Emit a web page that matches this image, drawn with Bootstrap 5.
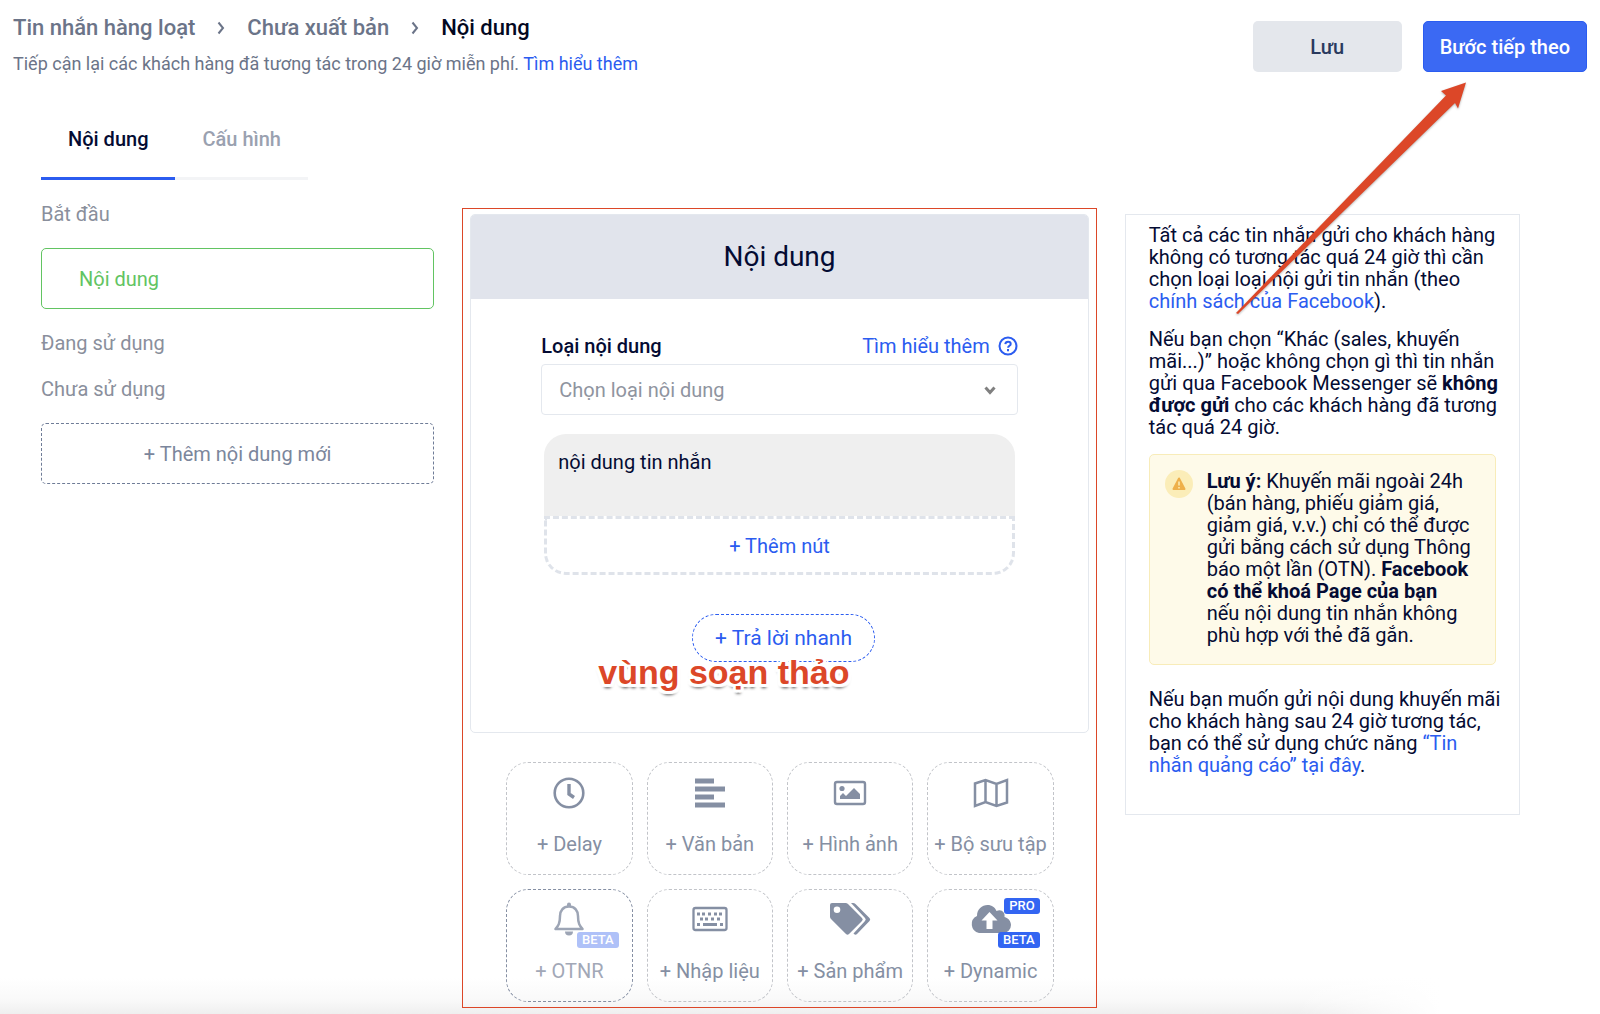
<!DOCTYPE html>
<html lang="vi">
<head>
<meta charset="utf-8">
<meta name="viewport" content="width=device-width, initial-scale=1">
<title>Tin nhắn hàng loạt</title>
<link href="https://cdn.jsdelivr.net/npm/bootstrap@5.3.0/dist/css/bootstrap.min.css" rel="stylesheet">
<style>
:root{--ink:#040b33;--slate:#6b7488;--muted:#8a8f9c;--tile:#858fa3;--blue:#2b5cf0;--line:#e4e8ee;--red:#dc4728}
body{font-family:Roboto,"Noto Sans",sans-serif;font-size:20px;line-height:24px;color:var(--ink);background:#fff;min-height:100vh}
a{color:var(--blue);text-decoration:none}
.page{background:linear-gradient(to right,transparent 81%,#fff 90%),linear-gradient(to top,#efefef,#f9f9f9 14px,#fff 36px);min-height:100vh;padding-bottom:6px}
.topbar{padding:14px 13px 0}
.crumbs{font-size:22px;line-height:28px;font-weight:500;gap:22px;margin-bottom:11px}
.crumbs a{color:var(--slate)}
.crumbs .here{color:#03081f}
.subtitle{font-size:18px;line-height:22px;color:var(--slate)}
.actions{gap:21px;padding-top:7px}
.actions .btn{height:51px;border-radius:5px;font-size:20px;font-weight:500;padding:0 16px}
.btn-save{min-width:149px;background:#e4e7ec;color:#2a3a5e}
.btn-next{background:#3b69f3;color:#fff;border-color:#2b5cf0}
.tabs{padding:52px 0 0 41px}
.tabs .nav-link{color:#9aa1b0;font-weight:500;padding:0 27px 26px;border-bottom:3px solid #f3f4f6}
.tabs .nav-link.active{color:var(--ink);border-color:var(--blue)}
.board{display:grid;grid-template-columns:393fr 634fr 395fr;column-gap:28px;align-items:start;padding:22px 80px 0 41px}
.steps{gap:22px;color:var(--muted)}
.step-btn{height:61px;border-radius:5px;background:#fff;text-align:left;padding:0 37px;border:1px solid #62c462;color:#62c462}
.step-add{border:1px dashed #6f7c97;color:#7b869c;text-align:center}
.editor{margin-top:6px;border:1px solid var(--red);padding:5px 7px}
.composer{border:1px solid var(--line);border-radius:5px;background:#fff;position:relative}
.composer-head{background:#e1e4ec;font-size:28px;line-height:34px;padding:25px 0;border-radius:4px 4px 0 0;font-weight:400;margin:0}
.composer-body{padding:35px 70px 70px}
.composer-body label{font-weight:500}
.composer-body .form-select{height:51px;margin:6px 0 19px;border-color:#e4e8ee;border-radius:4px;color:#8f94a0;font-size:20px;padding:0 40px 0 17px;background-image:url("data:image/svg+xml,%3Csvg xmlns='http://www.w3.org/2000/svg' viewBox='0 0 16 16'%3E%3Cpath d='M3.5 5.5 8 10.500l4.500-5' fill='none' stroke='%23808080' stroke-width='3'/%3E%3C/svg%3E");background-size:16px 16px;background-position:right 19px center}
.bubble{margin:0 3px}
.bubble-text{display:block;width:100%;height:82px;border:0;resize:none;border-radius:22px 22px 0 0;background:#efefef;color:var(--ink);padding:16px 14px;line-height:24px}
.bubble-add{width:100%;height:59px;border:3px dashed #dfe3ea;border-radius:0 0 22px 22px;background:#fff;color:var(--blue)}
.quick{height:48px;font-size:21px;border:1px dashed var(--blue);border-radius:24px;background:#fff;color:var(--blue);padding:0 22px;margin:39px 0 0 8px}
.note-label{position:absolute;left:127px;bottom:40px;font:bold 34px/40px "Liberation Sans",Arial,sans-serif;color:var(--red);
text-shadow:2px 0 #fff,-2px 0 #fff,0 2px #fff,0 -2px #fff,2px 2px #fff,-2px 2px #fff,2px -2px #fff,-2px -2px #fff,3px 0 #fff,-3px 0 #fff,0 3px #fff,3px 3px 1px #fff,-3px 3px 1px #fff,0 4px 3px rgba(0,0,0,.7)}
.blocks{display:grid;grid-template-columns:repeat(4,1fr);gap:14px;padding:29px 35px 0 36px}
.block{position:relative;height:113px;border:1px dashed #c2c4c9;border-radius:22px;background:transparent;color:var(--tile);padding:10px 0 0;gap:19px;white-space:nowrap}
.block svg{width:42px;height:40px;fill:none;stroke:var(--tile);stroke-width:2}
.block .solid{fill:var(--tile);stroke:none}
.block.off{border-color:#858fa3;color:#a2a8b7}
.block.off svg{opacity:.8}
.tag{position:absolute;right:13px;font-size:13px;line-height:16px;font-weight:500;background:#3365f2;color:#fff;border-radius:3px;padding:0 5px;border:0}
.tag-low{top:42px}
.tag-high{top:8px}
.off .tag{background:#afc1f8}
.info{margin-top:12px;border:1px solid var(--line);background:#fff;padding:9px 15px 38px 23px;line-height:22px}
.info p{margin-bottom:16px}
.warn{background:#fefae9;border:1px solid #f8ecb9;border-radius:5px;padding:15px 22px 18px 15px;gap:14px;margin:0 8px 23px 0}
.warn svg{width:28px;height:28px;flex:none}
.pointer{position:absolute;top:76px;right:130px;width:240px;height:242px;pointer-events:none;z-index:5;filter:drop-shadow(0 1px 1px rgba(0,0,0,.3))}
</style>
<script src="https://cdn.jsdelivr.net/npm/bootstrap@5.3.0/dist/js/bootstrap.bundle.min.js"></script>
</head>
<body>
<div class="page position-relative">
  <header class="topbar d-flex justify-content-between align-items-start">
    <div>
      <nav aria-label="breadcrumb">
        <ol class="crumbs d-flex list-unstyled align-items-center">
          <li><a href="#">Tin nhắn hàng loạt</a></li>
          <li class="d-flex" aria-hidden="true"><svg width="8" height="14" viewBox="0 0 8 14" fill="none" stroke="#6b7488" stroke-width="2"><path d="M1.500 1.500 6 7l-4.500 5.500"/></svg></li>
          <li><a href="#">Chưa xuất bản</a></li>
          <li class="d-flex" aria-hidden="true"><svg width="8" height="14" viewBox="0 0 8 14" fill="none" stroke="#6b7488" stroke-width="2"><path d="M1.500 1.500 6 7l-4.500 5.500"/></svg></li>
          <li class="here" aria-current="page">Nội dung</li>
        </ol>
      </nav>
      <div class="subtitle">Tiếp cận lại các khách hàng đã tương tác trong 24 giờ miễn phí. <a href="#">Tìm hiểu thêm</a></div>
    </div>
    <div class="actions d-flex">
      <button type="button" class="btn btn-save">Lưu</button>
      <button type="button" class="btn btn-next">Bước tiếp theo</button>
    </div>
  </header>

  <nav class="tabs nav">
    <a class="nav-link active" href="#">Nội dung</a>
    <a class="nav-link" href="#">Cấu hình</a>
  </nav>

  <main class="board">
    <section class="steps d-flex flex-column">
      <div>Bắt đầu</div>
      <button type="button" class="step-btn">Nội dung</button>
      <div>Đang sử dụng</div>
      <div>Chưa sử dụng</div>
      <button type="button" class="step-btn step-add">+ Thêm nội dung mới</button>
    </section>

    <section class="editor">
      <div class="composer">
        <h1 class="composer-head text-center">Nội dung</h1>
        <div class="composer-body">
          <div class="d-flex justify-content-between">
            <label for="kind">Loại nội dung</label>
            <a href="#" class="d-flex align-items-center gap-2">Tìm hiểu thêm
              <svg width="20" height="20" viewBox="0 0 20 20" fill="none" stroke="#2b5cf0" stroke-width="2"><circle cx="10" cy="10" r="8.500"/><path d="M7.300 8.200c.2-1.600 1.300-2.400 2.800-2.400 1.600 0 2.600.9 2.600 2.100 0 1.900-2.600 1.800-2.600 3.900"/><path d="M10 13v2.200"/></svg></a>
          </div>
          <select id="kind" class="form-select"><option>Chọn loại nội dung</option></select>
          <div class="bubble">
            <textarea class="bubble-text" aria-label="Tin nhắn">nội dung tin nhắn</textarea>
            <button type="button" class="bubble-add d-block">+ Thêm nút</button>
          </div>
          <div class="text-center"><button type="button" class="quick">+ Trả lời nhanh</button></div>
        </div>
        <div class="note-label">vùng soạn thảo</div>
      </div>

      <div class="blocks">
        <button type="button" class="block d-flex flex-column align-items-center">
          <svg viewBox="0 0 42 40"><circle cx="21" cy="20" r="14.300" stroke-width="2.600"/><path d="M21 11v10l5 3.500" stroke-width="3.400"/></svg>
          <span>+ Delay</span></button>
        <button type="button" class="block d-flex flex-column align-items-center">
          <svg viewBox="0 0 42 40"><path class="solid" d="M6 5.500h19v5H6zM6 13.500h30v5H6zM6 21.500h19v5H6zM6 29.500h30v5H6z"/></svg>
          <span>+ Văn bản</span></button>
        <button type="button" class="block d-flex flex-column align-items-center">
          <svg viewBox="0 0 42 40"><rect x="6" y="9" width="30" height="22" rx="2" stroke-width="2.400"/><circle class="solid" cx="13" cy="15.500" r="2.600"/><path class="solid" d="M11 26v-3l3-3 3 3 8-8 6 6v5z"/></svg>
          <span>+ Hình ảnh</span></button>
        <button type="button" class="block d-flex flex-column align-items-center">
          <svg viewBox="0 0 42 40"><path stroke-width="2.500" d="M5 10.500 15.500 7l11 4L37 7v22.500L26.500 33l-11-4L5 33zM15.500 7v22M26.500 11v22"/></svg>
          <span>+ Bộ sưu tập</span></button>
        <button type="button" class="block off d-flex flex-column align-items-center">
          <svg viewBox="0 0 42 40"><path stroke-width="2.500" stroke-linejoin="round" d="M21 6.500c-6 0-9 4.500-9 9.500 0 8-2 10-4.500 13h27C32 26 30 24 30 16c0-5-3-9.500-9-9.500z"/><path class="solid" d="M19 4.500a2 2 0 0 1 4 0V7h-4zM17 31.500h8a4 4 0 0 1-8 0z"/></svg>
          <span>+ OTNR</span><span class="tag tag-low">BETA</span></button>
        <button type="button" class="block d-flex flex-column align-items-center">
          <svg viewBox="0 0 42 40"><rect x="4.500" y="8" width="33" height="22" rx="2" stroke-width="2.300"/><path stroke-width="3" d="M8 14h3m2 0h3m3 0h3m3 0h3m2 0h3M11 19h3m2 0h3m3 0h3m3 0h3M8 24.500h3m3 0h14m3 0h3"/></svg>
          <span>+ Nhập liệu</span></button>
        <button type="button" class="block d-flex flex-column align-items-center">
          <svg viewBox="0 0 42 40"><path class="solid" fill-rule="evenodd" d="M3 3h13.500q1.500 0 2.500 1l14 14q1.500 1.500 0 3L20 34q-1.500 1.500-3 0L2 19q-1-1-1-2.500V5q0-2 2-2zm5 3.500a3.300 3.300 0 1 0 0 6.600 3.300 3.300 0 0 0 0-6.600zM22 3h2q1.500 0 2.500 1L40.500 18q1.500 1.500 0 3L28 34q-1.500 1.500-3 0l-.5-.5L36 21q1.500-1.500 0-3z"/></svg>
          <span>+ Sản phẩm</span></button>
        <button type="button" class="block d-flex flex-column align-items-center">
          <svg viewBox="0 0 42 40"><path class="solid" fill-rule="evenodd" d="M9 33a9 9 0 0 1-2-17C7 9 12 5 17.500 5c4.500 0 7.500 2.500 9 6 4.500-2.500 9 1 8 6 4 1 6.500 4.500 6.500 8a8 8 0 0 1-8 8zM19.500 12l-8 8.500h5V29h6v-8.500h5z"/></svg>
          <span>+ Dynamic</span><span class="tag tag-high">PRO</span><span class="tag tag-low">BETA</span></button>
      </div>
    </section>

    <aside class="info">
      <p>Tất cả các tin nhắn gửi cho khách hàng không có tương tác quá 24 giờ thì cần chọn loại loại nội gửi tin nhắn (theo <a href="#">chính sách của Facebook</a>).</p>
      <p>Nếu bạn chọn “Khác (sales, khuyến mãi...)” hoặc không chọn gì thì tin nhắn gửi qua Facebook Messenger sẽ <strong>không được gửi</strong> cho các khách hàng đã tương tác quá 24 giờ.</p>
      <div class="warn d-flex">
        <svg viewBox="0 0 28 28"><circle cx="14" cy="14" r="14" fill="#fbedb8"/><path d="M14 8.500l5.500 10.500H8.500z" fill="#eeb04b" stroke="#eeb04b" stroke-width="2" stroke-linejoin="round"/><path d="M14 11.500v4M14 17v1.500" stroke="#fbedb8" stroke-width="1.500"/></svg>
        <div><strong>Lưu ý:</strong> Khuyến mãi ngoài 24h (bán hàng, phiếu giảm giá, giảm giá, v.v.) chỉ có thể được gửi bằng cách sử dụng Thông báo một lần (OTN). <strong>Facebook có thể khoá Page của bạn</strong> nếu nội dung tin nhắn không phù hợp với thẻ đã gắn.</div>
      </div>
      <div>Nếu bạn muốn gửi nội dung khuyến mãi cho khách hàng sau 24 giờ tương tác, bạn có thể sử dụng chức năng <a href="#">“Tin nhắn quảng cáo” tại đây</a>.</div>
    </aside>
  </main>

  <svg class="pointer" viewBox="0 0 240 242" aria-hidden="true"><path fill="#dc4728" d="M236 6.500 211 15l5 4.500L6 237l2 1L225 27l3 5.500z"/></svg>
</div>
</body>
</html>
